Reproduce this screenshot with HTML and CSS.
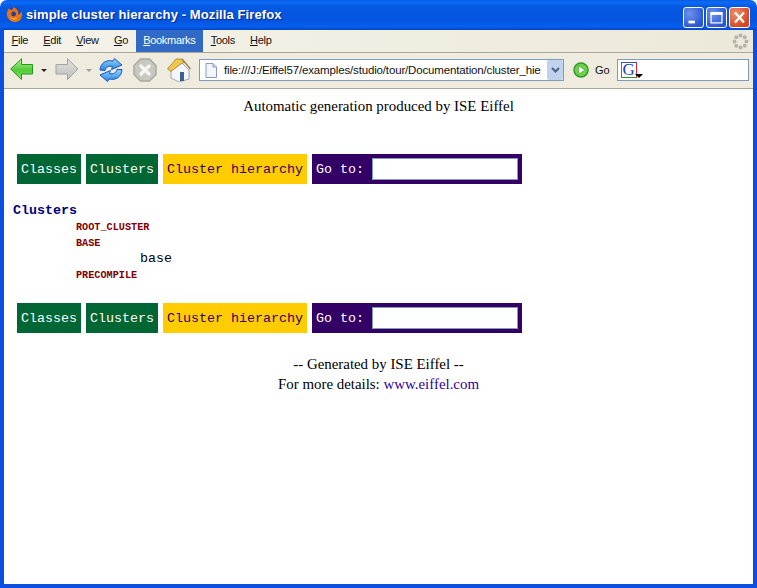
FILE: index.html
```html
<!doctype html>
<html lang="en">
  <head>
    <meta charset="UTF-8" />
    <title>simple cluster hierarchy - Mozilla Firefox</title>
    <link rel="stylesheet" href="styles.css">
  </head>
  <body>
    <div class="window">
      <div class="titlebar">
        <svg class="fx-logo" viewBox="0 0 17 17">
          <circle cx="8.5" cy="8.5" r="7.5" fill="#2a4a9a" />
          <path d="M3 2 C1 5 0 9 2 12 C4 16 10 17 13 15 C16 13 17 8 15 5 C15 8 13 9 12 8 C13 5 10 2 7 1 C8 3 6 4 5 4 C4 4 3 3 3 2 Z" fill="#e8741a" />
          <path d="M4 11 C6 14 10 14 12 12 C9 13 6 12 4 11 Z" fill="#f7c23c" />
          <path d="M6 6 C8 5 10 6 10 8 C10 10 8 11 6 10 C5 9 5 7 6 6 Z" fill="#28428f" />
        </svg>
        <span class="title">simple cluster hierarchy - Mozilla Firefox</span>
        <div class="win-btns">
          <div class="win-btn">
            <svg viewBox="0 0 21 21"><rect x="5" y="14" width="7" height="3" fill="#fff" /></svg>
          </div>
          <div class="win-btn">
            <svg viewBox="0 0 21 21"><path d="M4.5 5.5 H16.5 V16.5 H4.5 Z M4.5 6.5 H16.5" fill="none" stroke="#fff" stroke-width="1.4" /><rect x="4" y="4.5" width="13" height="3" fill="#fff" /></svg>
          </div>
          <div class="win-btn win-close">
            <svg viewBox="0 0 21 21"><path d="M5.5 5 L15.5 16 M15.5 5 L5.5 16" stroke="#fff" stroke-width="2.4" /></svg>
          </div>
        </div>
      </div>

      <div class="frame">
        <div class="menubar">
          <span class="menu-item"><u>F</u>ile</span>
          <span class="menu-item"><u>E</u>dit</span>
          <span class="menu-item"><u>V</u>iew</span>
          <span class="menu-item"><u>G</u>o</span>
          <span class="menu-item active"><u>B</u>ookmarks</span>
          <span class="menu-item"><u>T</u>ools</span>
          <span class="menu-item"><u>H</u>elp</span>
          <svg class="throbber" viewBox="0 0 20 20">
            <g fill="#b4b2aa">
              <circle cx="10" cy="3" r="2.3" /><circle cx="15" cy="5" r="2.3" />
              <circle cx="17" cy="10" r="2.3" /><circle cx="15" cy="15" r="2.3" />
              <circle cx="10" cy="17" r="2.3" /><circle cx="5" cy="15" r="2.3" />
              <circle cx="3" cy="10" r="2.3" /><circle cx="5" cy="5" r="2.3" />
            </g>
          </svg>
        </div>

        <div class="toolbar">
          <svg class="tb-icon tb-back" viewBox="0 0 24 24">
            <defs>
              <linearGradient id="green" x1="0" y1="0" x2="0" y2="1">
                <stop offset="0" stop-color="#b4f08c" />
                <stop offset="0.55" stop-color="#52cc3a" />
                <stop offset="1" stop-color="#86e060" />
              </linearGradient>
              <linearGradient id="grey" x1="0" y1="0" x2="0" y2="1">
                <stop offset="0" stop-color="#e2e2e0" />
                <stop offset="1" stop-color="#bdbdba" />
              </linearGradient>
              <linearGradient id="blue" x1="0" y1="0" x2="0" y2="1">
                <stop offset="0" stop-color="#8fd2f8" />
                <stop offset="1" stop-color="#2c84e4" />
              </linearGradient>
            </defs>
            <path d="M0.7 11 L11.5 0.8 V6.5 H22.5 V16 H11.5 V21.5 Z" fill="url(#green)" stroke="#1f9a1a" stroke-linejoin="round" />
          </svg>
          <span class="tb-drop"></span>
          <svg class="tb-icon tb-forward" viewBox="0 0 24 24">
            <path d="M23 11 L12.5 0.8 V6.5 H1 V16 H12.5 V21.5 Z" fill="url(#grey)" stroke="#a3a3a0" stroke-linejoin="round" />
          </svg>
          <span class="tb-drop tb-drop-off"></span>
          <svg class="tb-icon tb-reload" viewBox="0 0 24 24">
            <path d="M1 12 C1.5 5 7 1.5 14 3 L15.5 0.5 L23 7 L12.5 11.5 L13.5 8.5 C9.5 7.5 7 9 6 12.5 Z" fill="url(#blue)" stroke="#1557c0" stroke-linejoin="round" />
            <path d="M23 11.5 C22.5 19 17 22.5 10 21 L8.5 23.5 L1 17 L11.5 12.5 L10.5 15.5 C14.5 16.5 17 15 18 11.5 Z" fill="url(#blue)" stroke="#1557c0" stroke-linejoin="round" />
          </svg>
          <svg class="tb-icon tb-stop" viewBox="0 0 24 24">
            <path d="M7.5 1 H16.5 L23 7.5 V16.5 L16.5 23 H7.5 L1 16.5 V7.5 Z" fill="#c8c7c0" stroke="#a9a8a2" stroke-width="1.5" />
            <path d="M8 8 L16 16 M16 8 L8 16" stroke="#f5f5f2" stroke-width="3.4" stroke-linecap="round" />
          </svg>
          <svg class="tb-icon tb-home" viewBox="0 0 24 24">
            <path d="M4 11 L14 4 L22 12 V21 L12 24 L4 20 Z" fill="#f4f6fa" stroke="#8a95a8" stroke-width="0.8" />
            <path d="M0.5 11 L9 1 H15 L17.5 4 L13 6.5 L4 13.5 Z" fill="#f2c64a" stroke="#9a7c30" stroke-width="0.8" stroke-linejoin="round" />
            <path d="M15 1 L23.5 11" fill="none" stroke="#8a7a50" stroke-width="1.2" />
            <rect x="13" y="14" width="4" height="9" fill="#3f5f8c" />
          </svg>

          <div class="urlbar">
            <svg class="page-icon" viewBox="0 0 12 15">
              <path d="M1 0.5 H8 L11.5 4 V14.5 H1 Z" fill="#f4f6fe" stroke="#8c97c4" />
              <path d="M8 0.5 V4 H11.5" fill="#d6dcf2" stroke="#8c97c4" />
            </svg>
            <span class="url-text">file:///J:/Eiffel57/examples/studio/tour/Documentation/cluster_hie</span>
            <span class="url-drop">
              <svg viewBox="0 0 9 7"><path d="M1 1 L4.5 4.5 L8 1" fill="none" stroke="#4d6185" stroke-width="2" /></svg>
            </span>
          </div>

          <svg class="go-icon" viewBox="0 0 16 16">
            <circle cx="8" cy="8" r="7" fill="#6fd24a" stroke="#2f9a22" stroke-width="1.5" />
            <path d="M5.5 3.8 L12 8 L5.5 12.2 Z" fill="#fff" stroke="#2f9a22" stroke-width="0.6" />
          </svg>
          <span class="go-label">Go</span>

          <div class="searchbar">
            <span class="g-box">G</span>
            <span class="g-drop"></span>
          </div>
        </div>

        <div class="content">
          <p class="top-note">Automatic generation produced by ISE Eiffel</p>

          <div class="nav">
            <a class="nav-cell green">Classes</a>
            <a class="nav-cell green">Clusters</a>
            <a class="nav-cell yellow">Cluster hierarchy</a>
            <div class="nav-cell goto">Go to: <span class="goto-input"></span></div>
          </div>

          <div class="tree">
            <div class="tree-head">Clusters</div>
            <div class="tree-name lvl1">ROOT_CLUSTER</div>
            <div class="tree-name lvl1">BASE</div>
            <div class="tree-leaf lvl2">base</div>
            <div class="tree-name lvl1">PRECOMPILE</div>
          </div>

          <div class="nav">
            <a class="nav-cell green">Classes</a>
            <a class="nav-cell green">Clusters</a>
            <a class="nav-cell yellow">Cluster hierarchy</a>
            <div class="nav-cell goto">Go to: <span class="goto-input"></span></div>
          </div>

          <div class="footer">
            <div>-- Generated by ISE Eiffel --</div>
            <div>For more details: <a class="site-link">www.eiffel.com</a></div>
          </div>
        </div>
      </div>
    </div>
  </body>
</html>
```

FILE: styles.css
```css
html,
body {
  margin: 0;
  padding: 0;
  overflow: hidden;
  background: #fff;
}
.window {
  display: flex;
  flex-direction: column;
  width: 757px;
  height: 588px;
}

/* title bar */
.titlebar {
  display: flex;
  align-items: center;
  flex: none;
  height: 30px;
  padding: 0 7px 0 6px;
  box-sizing: border-box;
  border-radius: 7px 7px 0 0;
  background: linear-gradient(#0a5ae6 0, #0a6cf5 8%, #0458e2 22%, #0454e0 70%, #0660ee 88%, #0546c8 100%);
}
.fx-logo {
  width: 17px;
  height: 17px;
  margin-top: -2px;
}
.title {
  margin-left: 3px;
  margin-top: -2px;
  font-family: "Liberation Sans", sans-serif;
  font-size: 13px;
  font-weight: bold;
  letter-spacing: 0.1px;
  color: #fff;
  text-shadow: 1px 1px 1px #0a2a90;
}
.win-btns {
  display: flex;
  gap: 2px;
  margin-left: auto;
  margin-top: 4px;
}
.win-btn {
  width: 21px;
  height: 21px;
  box-sizing: border-box;
  border: 1px solid #fff;
  border-radius: 3px;
  background: radial-gradient(circle at 30% 30%, #6f93ea, #2a56d4 75%);
}
.win-btn svg {
  display: block;
  width: 19px;
  height: 19px;
}
.win-close {
  background: radial-gradient(circle at 30% 30%, #ee9070, #d4471f 75%);
}

/* window frame */
.frame {
  display: flex;
  flex-direction: column;
  flex: 1;
  min-height: 0;
  border-style: solid;
  border-color: #0a4fe0;
  border-width: 0 4px 4px;
}

/* menu */
.menubar {
  display: flex;
  align-items: stretch;
  flex: none;
  height: 23px;
  box-sizing: border-box;
  border-bottom: 1px solid #aca899;
  background: linear-gradient(90deg, #f5f3ea, #ece9da);
  font-family: "Liberation Sans", sans-serif;
  font-size: 11px;
  letter-spacing: -0.3px;
  color: #111;
}
.menu-item {
  padding: 4px 7.6px 0;
}
.menu-item.active {
  background: #316ac5;
  color: #fff;
}
.throbber {
  width: 17px;
  height: 17px;
  margin-left: auto;
  margin-right: 4px;
  margin-top: 3px;
}

/* toolbar */
.toolbar {
  display: flex;
  align-items: center;
  flex: none;
  height: 36px;
  box-sizing: border-box;
  padding-bottom: 1px;
  border-bottom: 1px solid #aca899;
  background: #efecdf;
}
.tb-icon {
  width: 24px;
  height: 24px;
  flex: none;
}
.tb-back {
  margin-left: 6px;
}
.tb-drop {
  flex: none;
  width: 0;
  height: 0;
  margin-left: 7px;
  border-style: solid;
  border-width: 3px 3px 0;
  border-color: #222 transparent transparent;
}
.tb-drop-off {
  border-top-color: #9a9a96;
}
.tb-forward {
  margin-left: 8px;
}
.tb-reload {
  margin-left: 7px;
}
.tb-stop {
  margin-left: 10px;
}
.tb-home {
  margin-left: 10px;
}
.urlbar {
  display: flex;
  align-items: center;
  flex: none;
  width: 365px;
  height: 22px;
  margin-left: 8px;
  box-sizing: border-box;
  border: 1px solid #7f9db9;
  background: #fff;
}
.page-icon {
  width: 12px;
  height: 15px;
  margin-left: 5px;
  flex: none;
}
.url-text {
  flex: 1;
  margin-left: 7px;
  white-space: nowrap;
  font-family: "Liberation Sans", sans-serif;
  font-size: 11.5px;
  letter-spacing: -0.15px;
  color: #111;
}
.url-drop {
  display: flex;
  align-items: center;
  justify-content: center;
  flex: none;
  width: 16px;
  height: 20px;
  border-radius: 2px;
  background: #c1d2ee;
}
.url-drop svg {
  width: 9px;
  height: 7px;
}
.go-icon {
  flex: none;
  width: 16px;
  height: 16px;
  margin-left: 9px;
}
.go-label {
  margin-left: 6px;
  font-family: "Liberation Sans", sans-serif;
  font-size: 11px;
  color: #111;
}
.searchbar {
  display: flex;
  align-items: center;
  flex: none;
  width: 132px;
  height: 22px;
  margin-left: 7px;
  box-sizing: border-box;
  border: 1px solid #7f9db9;
  background: #fff;
}
.g-box {
  width: 16px;
  height: 16px;
  margin-left: 3px;
  box-sizing: border-box;
  border-style: solid;
  border-width: 1px;
  border-color: #2a55b5 #d42a2a #2f9a22 #2f9a22;
  font-family: "Liberation Serif", serif;
  font-size: 17px;
  line-height: 14px;
  text-align: center;
  color: #1c3fb0;
}
.g-drop {
  width: 0;
  height: 0;
  margin-left: -2px;
  margin-top: 12px;
  border-style: solid;
  border-width: 4px 4px 0;
  border-color: #000 transparent transparent;
}

/* page */
.content {
  flex: 1;
  min-height: 0;
  padding-top: 8px;
  background: #fff;
  font-family: "Liberation Serif", serif;
  font-size: 14.9px;
  color: #000;
}
.top-note {
  margin: 0 0 39px;
  line-height: 18px;
  text-align: center;
}
.nav {
  display: flex;
  gap: 5px;
  margin-left: 13px;
  font-family: "Liberation Mono", monospace;
  font-size: 13.33px;
}
.nav-cell {
  display: flex;
  align-items: center;
  height: 30px;
  padding: 0 4px;
  box-sizing: border-box;
  white-space: pre;
}
.green {
  background: #006633;
  color: #fff;
}
.yellow {
  background: #ffcc00;
  color: #330066;
}
.goto {
  width: 210px;
  background: #330066;
  color: #fff;
}
.goto-input {
  flex: 1;
  height: 22px;
  box-sizing: border-box;
  border: 1px solid #7f9db9;
  background: #fff;
}
.tree {
  margin: 18px 0 20px 9px;
  font-family: "Liberation Mono", monospace;
}
.tree-head {
  height: 17px;
  line-height: 17px;
  font-size: 13.33px;
  font-weight: bold;
  color: #000080;
}
.tree-name {
  height: 16px;
  line-height: 18px;
  font-size: 10.2px;
  font-weight: bold;
  color: #800000;
}
.tree-leaf {
  height: 16px;
  line-height: 15px;
  font-size: 13.33px;
}
.lvl1 {
  margin-left: 63px;
}
.lvl2 {
  margin-left: 127px;
}
.footer {
  margin-top: 21px;
  line-height: 20px;
  text-align: center;
}
.site-link {
  color: #330099;
}
```
